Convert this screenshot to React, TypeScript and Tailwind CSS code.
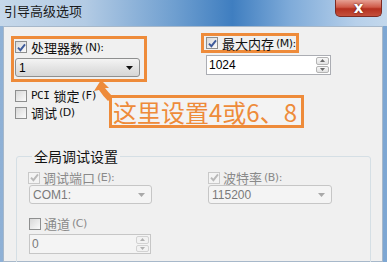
import clsx from 'clsx';

const CJK = "font-['Noto_Sans_CJK_SC',sans-serif]";
const ORANGE = 'border-[#ee8b3a]';

function Check({ checked, disabled }: { checked?: boolean; disabled?: boolean }) {
  return (
    <span
      className={clsx(
        'w-[12px] h-[12px] border flex items-center justify-center shrink-0',
        disabled
          ? 'border-[#c9c9c9] bg-[#f4f4f4]'
          : 'border-[#8e8f8f] bg-[linear-gradient(135deg,#d8d8d8,#fbfbfb)]',
      )}
    >
      {checked && (
        <svg width="9" height="9" viewBox="0 0 9 9">
          <path
            d="M1 4.6 L3.4 7.2 L8 1.4"
            stroke={disabled ? '#b9b9b9' : '#3d5a9a'}
            strokeWidth="1.9"
            fill="none"
          />
        </svg>
      )}
    </span>
  );
}

function Combo({
  value,
  disabled,
  className,
}: {
  value: string;
  disabled?: boolean;
  className?: string;
}) {
  return (
    <div
      className={clsx(
        'h-[19px] border rounded-[3px] flex items-center justify-between pl-[3px] pr-[6px] text-[12px] font-["Liberation_Sans",sans-serif]',
        disabled
          ? 'border-[#c6c6c6] bg-[#f4f4f4] text-[#7a7a7a]'
          : 'border-[#8e8f8f] bg-[linear-gradient(#f4f4f4,#e4e4e4_50%,#d6d6d6)] text-black',
        className,
      )}
    >
      <span>{value}</span>
      <svg width="7" height="4" viewBox="0 0 7 4">
        <path d="M0 0 H7 L3.5 4 Z" fill={disabled ? '#a8a8a8' : '#111'} />
      </svg>
    </div>
  );
}

function Spin({ value, disabled, className }: { value: string; disabled?: boolean; className?: string }) {
  return (
    <div
      className={clsx(
        'h-[20px] border flex text-[12px] font-["Liberation_Sans",sans-serif]',
        disabled ? 'border-[#c6c6c6] bg-[#f4f4f4] text-[#7a7a7a]' : 'border-[#abadb3] bg-white text-black',
        className,
      )}
    >
      <span className="flex-1 pl-[2px] leading-[18px]">{value}</span>
      <div className="w-[15px] flex flex-col gap-[1px] p-[1px]">
        {[0, 1].map((i) => (
          <div
            key={i}
            className={clsx(
              'flex-1 border rounded-[2px] flex items-center justify-center',
              disabled ? 'border-[#d2d2d2] bg-[#f2f2f2]' : 'border-[#b4b4b4] bg-[linear-gradient(#f7f7f7,#e2e2e2)]',
            )}
          >
            <svg width="5" height="3" viewBox="0 0 5 3">
              <path d={i === 0 ? 'M0 3 H5 L2.5 0 Z' : 'M0 0 H5 L2.5 3 Z'} fill={disabled ? '#b0b0b0' : '#6a6a6a'} />
            </svg>
          </div>
        ))}
      </div>
    </div>
  );
}

function Label({ text, key2, disabled }: { text: string; key2: string; disabled?: boolean }) {
  return (
    <span className={clsx('flex items-center leading-none', disabled ? 'text-[#8a8a8a]' : 'text-[#111]')}>
      <span className="text-[13px]">{text}</span>
      <span className="text-[11px] ml-[2px] font-['DejaVu_Sans',sans-serif] tracking-[-0.5px]">{key2}</span>
    </span>
  );
}

export default function App() {
  return (
    <div
      className={clsx(
        'relative w-[387px] h-[262px] overflow-hidden bg-[linear-gradient(90deg,#8fb1d6,#6e9ccd_50%,#7ea7d3)]',
        CJK,
      )}
    >
      {/* title bar */}
      <div className="relative h-[26px] bg-[linear-gradient(90deg,#c6d8ea_0%,#b3cbe4_22%,#6f9fd0_45%,#3f7ec0_60%,#7fabd9_75%,#b7d0ea_92%,#c3d8ec_100%)]">
        <span className="absolute left-[4px] top-[4px] text-[13px] leading-none text-[#1a1a1a]">引导高级选项</span>
        <div className="absolute right-[5px] top-0 w-[47px] h-[17px] rounded-b-[5px] border border-t-0 border-[#7d2a22] bg-[linear-gradient(#e6a093,#cf5a48_45%,#b5301f_55%,#c4503c)] flex items-center justify-center">
          <span className="text-white font-bold text-[15px] leading-[15px] font-['DejaVu_Sans',sans-serif] [text-shadow:0_0_2px_#4a0a05]">
            x
          </span>
        </div>
      </div>

      {/* client area */}
      <div className="ml-[3px] w-[380px] h-[236px] border border-[#a7b8ca] bg-[#f0f0f0]">
        <div className="flex pl-[7px] pt-[9px]">
          <div className={clsx('w-[136px] h-[46px] border-[3px] pl-[1px] pt-[1px]', ORANGE)}>
            <div className="h-[14px] flex items-center gap-[4px]">
              <Check checked />
              <Label text="处理器数" key2="(N):" />
            </div>
            <Combo value="1" className="ml-[0px] mt-[4px] w-[125px]" />
          </div>
          <div className="ml-[54px] -mt-[3px]">
            <div className={clsx('w-[98px] h-[20px] border-[3px] pl-[2px] flex items-center gap-[4px]', ORANGE)}>
              <Check checked />
              <Label text="最大内存" key2="(M):" />
            </div>
            <Spin value="1024" className="ml-[5px] mt-[2px] w-[125px]" />
          </div>
        </div>

        <div className="pl-[11px] mt-[7px] h-[13px] flex items-center gap-[4px]">
          <Check />
          <span className="flex items-center leading-none text-[#111]">
            <span className="text-[11px] font-['DejaVu_Sans_Mono',monospace] tracking-[-0.5px]">PCI</span>
            <span className="text-[13px] ml-[4px]">锁定</span>
            <span className="text-[11px] ml-[2px] font-['DejaVu_Sans',sans-serif]">(F)</span>
          </span>
        </div>
        <div className="pl-[11px] mt-[4px] h-[13px] flex items-center gap-[4px]">
          <Check />
          <Label text="调试" key2="(D)" />
        </div>

        {/* global debug group */}
        <fieldset className="ml-[12px] mt-[28px] w-[355px] h-[120px] border border-[#d5dfe5] rounded-[3px] pl-[11px] pt-[6px]">
          <legend className="ml-[4px] px-[2px] text-[14px] leading-[18px] text-[#111]">全局调试设置</legend>
          <div className="flex">
            <div className="w-[180px]">
              <div className="h-[13px] flex items-center gap-[3px]">
                <Check checked disabled />
                <Label text="调试端口" key2="(E):" disabled />
              </div>
              <Combo value="COM1:" disabled className="ml-[1px] mt-[1px] w-[123px]" />
            </div>
            <div>
              <div className="h-[13px] flex items-center gap-[3px]">
                <Check checked disabled />
                <Label text="波特率" key2="(B):" disabled />
              </div>
              <Combo value="115200" disabled className="mt-[1px] w-[124px]" />
            </div>
          </div>
          <div className="mt-[13px] ml-[1px] h-[13px] flex items-center gap-[3px]">
            <Check />
            <Label text="通道" key2="(C)" disabled />
          </div>
          <Spin value="0" disabled className="ml-[1px] mt-[4px] w-[122px]" />
        </fieldset>
      </div>

      {/* annotation */}
      <svg className="absolute left-0 top-0 pointer-events-none" width="387" height="262">
        <path
          d="M101 80 L94 91 L99 90 Q103 96 108 101 L113 97 Q108 92 105 88 L109 88 Z"
          fill="#ee8b3a"
        />
      </svg>
      <div
        className={clsx(
          'absolute left-[109px] top-[95px] w-[195px] h-[33px] border-[3px] bg-[#f3f3f3] flex items-center pl-[1px] text-[24px] leading-none text-[#ee8b3a]',
          ORANGE,
        )}
      >
        这里设置4或6、8
      </div>
    </div>
  );
}
